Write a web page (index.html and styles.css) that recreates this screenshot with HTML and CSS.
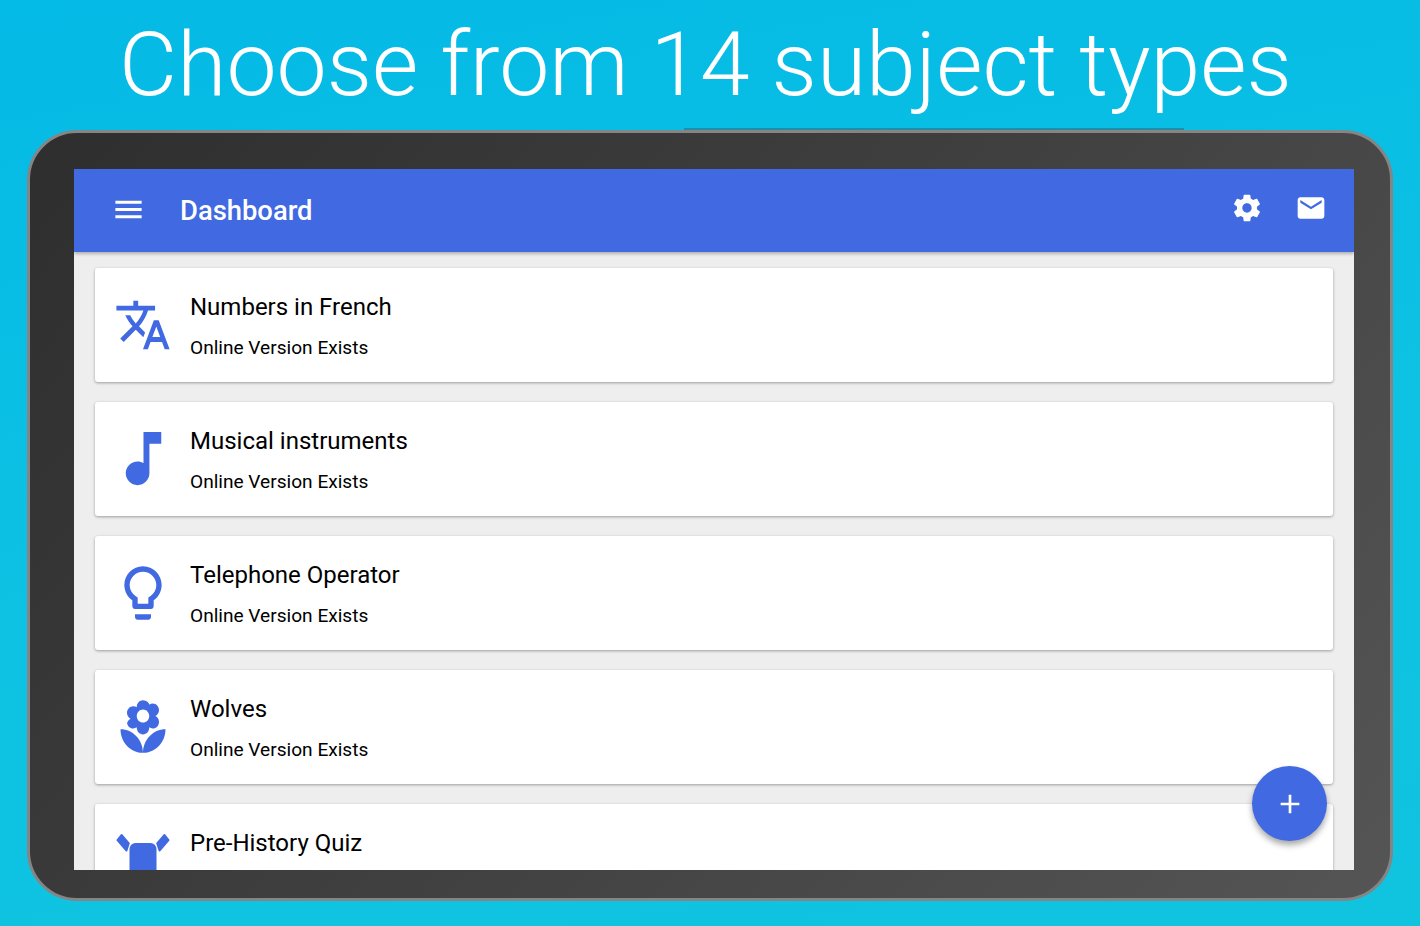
FILE: index.html
```html
<!DOCTYPE html>
<html lang="en">

<head>
    <meta charset="UTF-8">
    <title>Choose from 14 subject types</title>
    <link rel="stylesheet" href="styles.css">
</head>

<body>
    <h1 class="headline">Choose from 14 subject types</h1>

    <div class="tablet">
        <div class="screen">
            <div class="appbar">
                <svg class="menu-icon" viewBox="0 0 24 24"><path d="M3 18h18v-2H3v2zm0-5h18v-2H3v2zm0-7v2h18V6H3z"/></svg>
                <div class="appbar-title">Dashboard</div>
                <svg class="gear-icon" viewBox="0 0 24 24"><path d="M19.43 12.98c.04-.32.07-.64.07-.98s-.03-.66-.07-.98l2.11-1.65c.19-.15.24-.42.12-.64l-2-3.46c-.12-.22-.39-.3-.61-.22l-2.49 1c-.52-.4-1.08-.73-1.69-.98l-.38-2.65C14.46 2.18 14.25 2 14 2h-4c-.25 0-.46.18-.49.42l-.38 2.65c-.61.25-1.17.59-1.69.98l-2.49-1c-.23-.09-.49 0-.61.22l-2 3.46c-.13.22-.07.49.12.64l2.11 1.65c-.04.32-.07.65-.07.98s.03.66.07.98l-2.11 1.65c-.19.15-.24.42-.12.64l2 3.46c.12.22.39.3.61.22l2.49-1c.52.4 1.08.73 1.69.98l.38 2.65c.03.24.24.42.49.42h4c.25 0 .46-.18.49-.42l.38-2.65c.61-.25 1.17-.59 1.69-.98l2.49 1c.23.09.49 0 .61-.22l2-3.46c.12-.22.07-.49-.12-.64l-2.11-1.65zM12 15.5c-1.93 0-3.5-1.57-3.5-3.5s1.57-3.5 3.5-3.5 3.5 1.57 3.5 3.5-1.57 3.5-3.5 3.5z"/></svg>
                <svg class="mail-icon" viewBox="0 0 24 24"><path d="M20 4H4c-1.1 0-1.99.9-1.99 2L2 18c0 1.1.9 2 2 2h16c1.1 0 2-.9 2-2V6c0-1.1-.9-2-2-2zm0 4l-8 5-8-5V6l8 5 8-5v2z"/></svg>
            </div>

            <ul class="card-list">
                <li class="card">
                    <div class="card-icon">
                        <svg class="icon-translate" viewBox="0 0 24 24"><path d="M12.87 15.07l-2.54-2.51.03-.03c1.74-1.94 2.98-4.17 3.71-6.53H17V4h-7V2H8v2H1v1.99h11.17C11.5 7.92 10.44 9.75 9 11.35 8.07 10.32 7.3 9.19 6.69 8h-2c.73 1.63 1.73 3.17 2.98 4.56l-5.09 5.02L4 19l5-5 3.11 3.11.76-2.04zM18.5 10h-2L12 22h2l1.12-3h4.75L21 22h2l-4.5-12zm-2.62 7l1.62-4.33L19.12 17h-3.24z"/></svg>
                    </div>
                    <div class="card-text">
                        <div class="card-title">Numbers in French</div>
                        <div class="card-sub">Online Version Exists</div>
                    </div>
                </li>
                <li class="card">
                    <div class="card-icon">
                        <svg class="icon-note" viewBox="0 0 24 24"><path d="M12 3v10.55c-.59-.34-1.27-.55-2-.55-2.21 0-4 1.79-4 4s1.79 4 4 4 4-1.79 4-4V7h4V3h-6z"/></svg>
                    </div>
                    <div class="card-text">
                        <div class="card-title">Musical instruments</div>
                        <div class="card-sub">Online Version Exists</div>
                    </div>
                </li>
                <li class="card">
                    <div class="card-icon">
                        <svg class="icon-bulb" viewBox="0 0 24 24"><path d="M9 21c0 .55.45 1 1 1h4c.55 0 1-.45 1-1v-1H9v1zm3-19C8.14 2 5 5.14 5 9c0 2.38 1.19 4.47 3 5.74V17c0 .55.45 1 1 1h6c.55 0 1-.45 1-1v-2.26c1.81-1.27 3-3.36 3-5.74 0-3.86-3.14-7-7-7zm2.85 11.1l-.85.6V16h-4v-2.3l-.85-.6C7.8 12.16 7 10.63 7 9c0-2.76 2.24-5 5-5s5 2.24 5 5c0 1.63-.8 3.16-2.15 4.1z"/></svg>
                    </div>
                    <div class="card-text">
                        <div class="card-title">Telephone Operator</div>
                        <div class="card-sub">Online Version Exists</div>
                    </div>
                </li>
                <li class="card">
                    <div class="card-icon">
                        <svg class="icon-flower" viewBox="0 0 24 24" preserveAspectRatio="none"><path d="M12 22c4.97 0 9-4.03 9-9-4.97 0-9 4.03-9 9zM5.6 10.25c0 1.38 1.12 2.5 2.5 2.5.53 0 1.01-.16 1.42-.44l-.02.19c0 1.38 1.12 2.5 2.5 2.5s2.5-1.12 2.5-2.5l-.02-.19c.4.28.89.44 1.42.44 1.38 0 2.5-1.12 2.5-2.5 0-1-.59-1.85-1.43-2.25.84-.4 1.43-1.25 1.43-2.25 0-1.38-1.12-2.5-2.5-2.5-.53 0-1.01.16-1.42.44l.02-.19C14.5 3.12 13.38 2 12 2S9.5 3.12 9.5 4.5l.02.19c-.4-.28-.89-.44-1.42-.44-1.38 0-2.5 1.12-2.5 2.5 0 1 .59 1.85 1.43 2.25-.84.4-1.43 1.25-1.43 2.25zM12 5.5c1.38 0 2.5 1.12 2.5 2.5s-1.12 2.5-2.5 2.5S9.5 9.38 9.5 8s1.12-2.5 2.5-2.5zM3 13c0 4.97 4.03 9 9 9 0-4.97-4.03-9-9-9z"/></svg>
                    </div>
                    <div class="card-text">
                        <div class="card-title">Wolves</div>
                        <div class="card-sub">Online Version Exists</div>
                    </div>
                </li>
                <li class="card">
                    <div class="card-icon">
                        <svg class="icon-figure" viewBox="0 0 56 60">
                            <rect x="14.500" y="13" width="27" height="40" rx="6"/>
                            <polygon class="arm" points="6.500,5 2.500,10 11.500,20.500 13.800,13.300"/>
                            <polygon class="arm" points="49.500,5 53.500,10 44.500,20.500 42.200,13.300"/>
                        </svg>
                    </div>
                    <div class="card-text">
                        <div class="card-title">Pre-History Quiz</div>
                    </div>
                </li>
            </ul>

            <button class="fab">
                <svg viewBox="0 0 24 24"><path d="M19 13h-6v6h-2v-6H5v-2h6V5h2v6h6v2z"/></svg>
            </button>
        </div>
    </div>
</body>

</html>
```

FILE: styles.css
```css
* {
    padding: 0px;
    margin: 0px;
    box-sizing: border-box;
}

html,
body {
    width: 100%;
    height: 100%;
}

body {
    overflow: hidden;
    background: linear-gradient(170deg, #04bae6 0%, #0dc2e2 55%, #10c4e0 100%);
    font-family: Roboto, "Liberation Sans", sans-serif;
}

.headline {
    height: 130px;
    padding-top: 12px;
    padding-right: 9px;
    color: white;
    font-size: 89.5px;
    font-weight: 300;
    line-height: 106px;
    text-align: center;
    white-space: nowrap;
}

.tablet {
    position: relative;
    width: 1366px;
    height: 771px;
    margin-left: 27px;
    padding: 36px 36px 28px 44px;
    border: 3px solid #858585;
    border-radius: 50px;
    background: linear-gradient(130deg, #2e2e2e 0%, #404040 50%, #555555 100%);
}

.tablet::before {
    content: "";
    position: absolute;
    top: -5px;
    left: 654px;
    width: 500px;
    height: 2px;
    background-color: #1f8ea6;
}

.screen {
    position: relative;
    width: 1280px;
    height: 701px;
    overflow: hidden;
    background-color: #eeeeee;
}

.appbar {
    position: relative;
    z-index: 10;
    display: flex;
    align-items: center;
    height: 83px;
    background-color: #4169e1;
    box-shadow: 0px 2px 3px rgba(0, 0, 0, 0.25);
    fill: white;
}

.menu-icon {
    width: 35px;
    height: 35px;
    margin-left: 36.5px;
    margin-bottom: 2px;
}

.appbar-title {
    flex: 1;
    margin-left: 34.5px;
    color: white;
    font-size: 27.4px;
    font-weight: 500;
}

.gear-icon,
.mail-icon {
    width: 32px;
    height: 32px;
    margin-top: -5px;
}

.mail-icon {
    margin-left: 32px;
    margin-right: 27px;
}

.card-list {
    display: flex;
    flex-direction: column;
    gap: 20px;
    padding: 16px 21px 0px;
    list-style: none;
}

.card {
    display: flex;
    flex-shrink: 0;
    height: 114px;
    border-radius: 3px;
    background-color: white;
    box-shadow: 0px 1px 3px rgba(0, 0, 0, 0.35);
}

.card-icon {
    display: flex;
    align-items: center;
    justify-content: center;
    width: 95px;
    height: 114px;
    fill: #4169e1;
}

.icon-translate {
    width: 58px;
    height: 58px;
}

.icon-note {
    width: 71px;
    height: 71px;
    margin-left: 1px;
    margin-bottom: 2px;
}

.icon-bulb {
    width: 64px;
    height: 64px;
    margin-left: 1px;
    margin-bottom: 1px;
}

.icon-flower {
    width: 60px;
    height: 63px;
    margin-bottom: 2px;
}

.icon-figure {
    width: 56px;
    height: 60px;
    margin-top: -2px;
}

.arm {
    stroke: #4169e1;
    stroke-width: 2px;
    stroke-linejoin: round;
}

.card-title {
    margin-top: 24px;
    color: #000000;
    font-size: 24px;
    line-height: 30px;
}

.card-sub {
    margin-top: 11px;
    color: #000000;
    font-size: 19.1px;
    line-height: 30px;
}

.fab {
    position: absolute;
    z-index: 20;
    top: 597px;
    left: 1178px;
    display: flex;
    align-items: center;
    justify-content: center;
    width: 75px;
    height: 75px;
    border: none;
    border-radius: 50%;
    outline: none;
    background-color: #4169e1;
    box-shadow: 0px 4px 6px rgba(0, 0, 0, 0.35);
    fill: white;
}

.fab svg {
    width: 32px;
    height: 32px;
}
```
